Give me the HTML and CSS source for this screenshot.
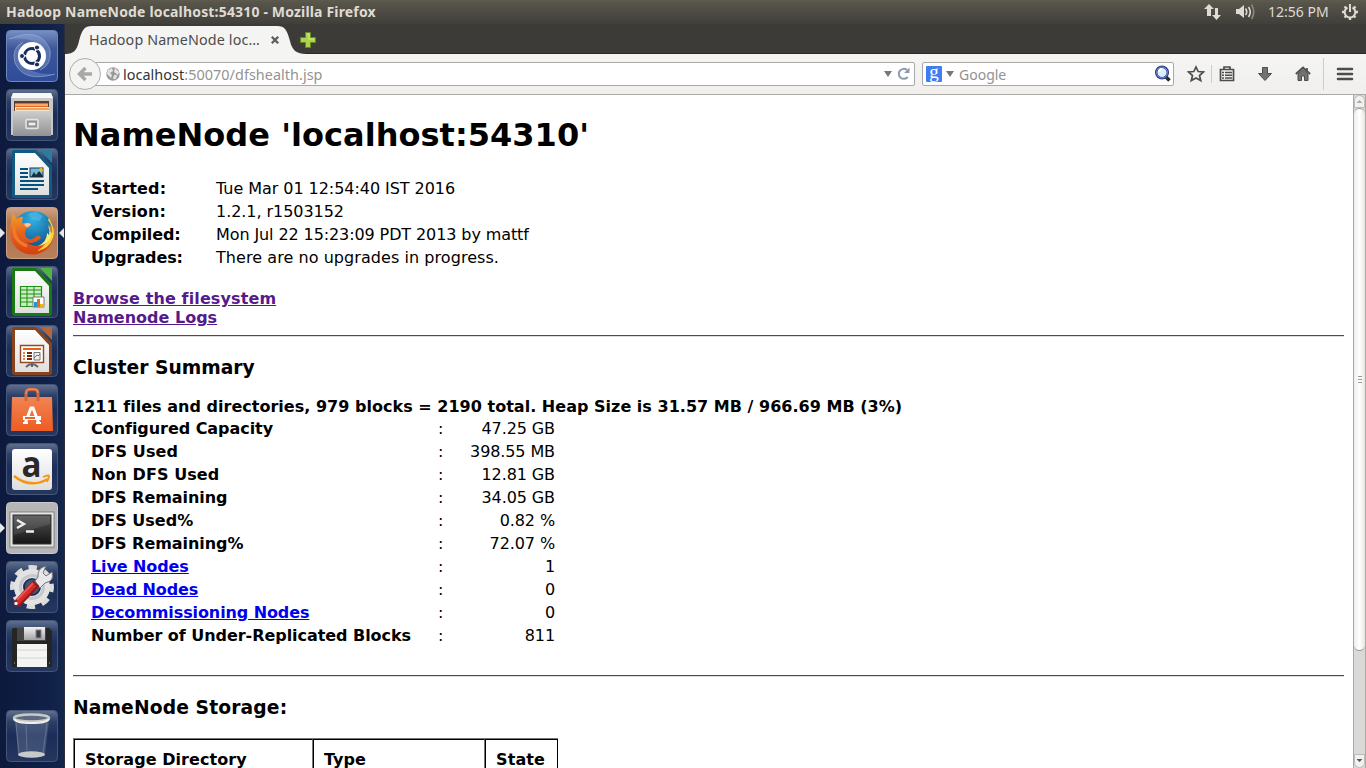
FILE: index.html
```html
<!DOCTYPE html>
<html lang="en">
<head>
<meta charset="utf-8">
<title>Hadoop NameNode localhost:54310</title>
<link rel="stylesheet" href="styles.css">
</head>
<body>
<div class="desktop">
<header class="panel">
  <span class="window-title">Hadoop NameNode localhost:54310 - Mozilla Firefox</span>
  <div class="indicators">
    <svg width="18" height="18" viewBox="0 0 18 18"><path d="M5 1L0 6H3V13H7V6H10ZM12.5 17L8 12H11V5H14V12H17Z" fill="#dfdbd2"/></svg>
    <svg class="ind-sound" width="21" height="18" viewBox="0 0 21 18"><path d="M1 6H4L9 2V15L4 11H1Z" fill="#dfdbd2"/><path d="M10.5 5.500Q13 9 10.5 12M13.500 4Q17 9 13.500 14" fill="none" stroke="#dfdbd2" stroke-width="1.600"/><path d="M16.500 1.500Q21 9 16.500 16" fill="none" stroke="#8b887f" stroke-width="1.600"/></svg>
    <span class="clock">12:56 PM</span>
    <svg width="18" height="18" viewBox="0 0 18 18"><g fill="none" stroke="#dfdbd2" stroke-width="2"><path d="M6.500 4.500A5.300 5.300 0 1 0 11.500 4.500M9 1V9"/><path stroke-width="2.300" d="M3.500 3.500L5 5M14.500 3.500L13 5M1 9H3.500M14.500 9H17M3.500 14.500L5 13M14.500 14.500L13 13M9 14.500V17"/></g></svg>
  </div>
</header>
<div class="workspace">
<nav class="launcher">
  <svg class="tile" viewBox="0 0 52 52">
    <defs>
      <linearGradient id="dash" x1="0" y1="0" x2="0" y2="1"><stop offset="0" stop-color="#7790c5"/><stop offset=".35" stop-color="#3f5799"/><stop offset="1" stop-color="#2e4c9b"/></linearGradient>
      <linearGradient id="glass" x1="0" y1="0" x2="0" y2="1"><stop offset="0" stop-color="#62718f"/><stop offset=".22" stop-color="#2c3f68"/><stop offset=".5" stop-color="#1a2d58"/><stop offset="1" stop-color="#26375f"/></linearGradient>
      <linearGradient id="silver" x1="0" y1="0" x2="0" y2="1"><stop offset="0" stop-color="#f2f2f2"/><stop offset="1" stop-color="#a4a4a4"/></linearGradient>
      <linearGradient id="drawer" x1="0" y1="0" x2="0" y2="1"><stop offset="0" stop-color="#cdcdcd"/><stop offset="1" stop-color="#929292"/></linearGradient>
      <linearGradient id="paper" x1="0" y1="0" x2="0" y2="1"><stop offset="0" stop-color="#fff"/><stop offset="1" stop-color="#dedede"/></linearGradient>
      <linearGradient id="tan" x1="0" y1="0" x2="0" y2="1"><stop offset="0" stop-color="#d0a385"/><stop offset=".3" stop-color="#ad7855"/><stop offset="1" stop-color="#b77f5a"/></linearGradient>
      <linearGradient id="bag" x1="0" y1="0" x2="0" y2="1"><stop offset="0" stop-color="#f18452"/><stop offset="1" stop-color="#ee5c22"/></linearGradient>
      <linearGradient id="screen" x1="0" y1="0" x2="0" y2="1"><stop offset="0" stop-color="#555"/><stop offset=".5" stop-color="#343434"/><stop offset="1" stop-color="#151515"/></linearGradient>
      <radialGradient id="globe" cx=".5" cy=".2" r=".8"><stop offset="0" stop-color="#31b3e5"/><stop offset="1" stop-color="#09427c"/></radialGradient>
      <linearGradient id="fox" x1="0" y1="0" x2="0" y2="1"><stop offset="0" stop-color="#f3a12a"/><stop offset=".45" stop-color="#e76422"/><stop offset="1" stop-color="#d53f12"/></linearGradient>
    </defs>
    <rect x=".5" y=".5" width="51" height="51" rx="4" fill="url(#dash)" stroke="#7087bb"/>
    <path d="M3 9Q35-4 44 20Q46 35 34 40Q42 29 38 19Q28 6 3 9ZM49 44Q18 53 9 33Q5 18 17 12Q10 23 15 33Q25 45 49 44Z" fill="#a9c3e8" opacity=".28"/>
    <path d="M3 9Q35-4 44 20Q46 35 34 40M49 44Q18 53 9 33Q5 18 17 12" fill="none" stroke="#aac0e5" stroke-opacity=".5"/>
    <circle cx="26" cy="26" r="14" fill="#fff"/>
    <circle cx="26" cy="26" r="7.500" fill="none" stroke="#182d5b" stroke-width="3" stroke-dasharray="14.200 1.500" stroke-dashoffset="7"/>
    <g fill="#182d5b" stroke="#fff"><circle cx="16" cy="26" r="2.500"/><circle cx="31" cy="17.500" r="2.500"/><circle cx="31" cy="34.500" r="2.500"/></g>
  </svg>

  <svg class="tile" viewBox="0 0 52 52">
    <rect x=".5" y=".5" width="51" height="51" rx="4" fill="url(#glass)" stroke="#465676"/>
    <path d="M7 4H45L47 9V46H5V9Z" fill="#c9c9c9"/><path d="M5 9L7 4H45L47 9Z" fill="#f8f8f8"/>
    <rect x="8" y="12" width="35" height="11" fill="#5b3b2d"/><rect x="9" y="14" width="33" height="8" fill="#e2682c"/><path d="M9 16H42" stroke="#ffbf76" stroke-width="1.500"/><path d="M9 18H43V22H9Z" fill="#f7e3cb"/><path d="M10 20H43" stroke="#e78e35" stroke-width="1.500"/>
    <path d="M7 22H45V47H7Z" fill="url(#drawer)"/><rect x="20" y="30.500" width="12" height="9" rx="1" fill="#aaa" stroke="#e5e5e5" stroke-width="1.500"/><rect x="22" y="33" width="8" height="4" fill="#eee" stroke="#777"/>
  </svg>

  <svg class="tile" viewBox="0 0 52 52">
    <rect x=".5" y=".5" width="51" height="51" rx="4" fill="url(#glass)" stroke="#465676"/>
    <path d="M8 2H30L46 18V47Q46 50 43 50H9Q6 50 6 47V4Q6 2 8 2Z" fill="#105a83"/><path d="M9 5H29L43 20V47H9Z" fill="url(#paper)"/><path d="M34 2H46V15Z" fill="#3279a0"/>
    <g stroke="#07527b" stroke-width="2"><path d="M14 21H22M14 25H22M14 29H22M14 33H38M14 37H38M14 41H32"/></g>
    <rect x="24" y="20" width="13" height="9" fill="#75b7da" stroke="#123b51"/><circle cx="35" cy="22" r="2" fill="#e9b92b"/><path d="M25 29L28 24L30 27L33 23L37 28V29Z" fill="#182f3b"/>
  </svg>

  <div class="slot">
    <svg class="tile" viewBox="0 0 52 52">
      <rect x=".5" y=".5" width="51" height="51" rx="4" fill="url(#tan)" stroke="#cba184"/>
      <circle cx="27" cy="25" r="21" fill="url(#globe)"/><path d="M22 7L29 4L37 9L33 14L26 12Z" fill="#58b7e0" opacity=".6"/>
      <path d="M7 7L11 12Q14 9 17 10L16 16L25 17L24 20L20 22Q17 29 23 32Q27 33 31 29Q34 28 35 31Q28 38 20 35Q31 43 40 34Q47 28 43 17L47 21Q47 16 43 11Q49 19 48 27Q47 42 32 47Q16 50 7 37Q1 25 7 7Z" fill="url(#fox)"/><path d="M42 13Q47 19 46 26L43 24Q44 36 31 44Q43 42 47 31Q50 23 43 11Z" fill="#f9d33c"/><path d="M42 18Q46 23 44 29L41 26Q41 35 32 39Q42 38 45 29" fill="#ffe974"/><path d="M8 19Q7 34 21 39" fill="none" stroke="#ef7c28" stroke-width="3"/><path d="M18 17Q21 15 25 17Q24 20 20 20Z" fill="#f7c6a2"/>
    </svg>
    <span class="arrow-left"></span><span class="arrow-right"></span>
  </div>

  <svg class="tile" viewBox="0 0 52 52">
    <rect x=".5" y=".5" width="51" height="51" rx="4" fill="url(#glass)" stroke="#465676"/>
    <path d="M8 2H30L46 18V47Q46 50 43 50H9Q6 50 6 47V4Q6 2 8 2Z" fill="#187814"/><path d="M9 5H29L43 20V47H9Z" fill="url(#paper)"/><path d="M34 2H46V15Z" fill="#52b344"/>
    <path d="M14.5 20.500H35.500V40.500H14.500Z" fill="#c8efbf" stroke="#238d19" stroke-width="1.200"/><path d="M15 24H35M15 28H35M15 32H35M15 36H35M21 20V40M28 20V40" stroke="#238d19"/>
    <path d="M27 31H38V41H27Z" fill="#fff" stroke="#777"/><path d="M28 41V36H31V41" fill="#2599cc"/><path d="M31 41V33H34V41" fill="#e46e27"/><path d="M34 41V38H38V41" fill="#ecb51b"/>
  </svg>

  <svg class="tile" viewBox="0 0 52 52">
    <rect x=".5" y=".5" width="51" height="51" rx="4" fill="url(#glass)" stroke="#465676"/>
    <path d="M8 2H30L46 18V47Q46 50 43 50H9Q6 50 6 47V4Q6 2 8 2Z" fill="#87421e"/><path d="M9 5H29L43 20V47H9Z" fill="url(#paper)"/><path d="M34 2H46V15Z" fill="#b86639"/>
    <path d="M14.500 20.500H37.500V37.500H14.500Z" fill="#fff" stroke="#994720" stroke-width="1.400"/><path d="M17 24H35" stroke="#d8651f" stroke-width="2"/><path d="M17 28H19M17 31H19M17 34H19" stroke="#e6823b" stroke-width="2"/><path d="M21 28H26M21 31H26M21 34H26" stroke="#762c0b" stroke-width="2"/><path d="M28 27.500H34V35H28Z" fill="#eee" stroke="#777"/><path d="M28 33L31 30L32 31L34 29" fill="none" stroke="#409831"/><path d="M20 42Q26 36 32 42M26 37V42" fill="none" stroke="#666" stroke-width="2"/>
  </svg>

  <svg class="tile" viewBox="0 0 52 52">
    <rect x=".5" y=".5" width="51" height="51" rx="4" fill="url(#glass)" stroke="#465676"/>
    <path d="M6 13H46L47 47H5Z" fill="url(#bag)"/><path d="M20 17V9Q20 5.500 24 5.500H28Q32 5.500 32 9V17" fill="none" stroke="#d5663d" stroke-width="3"/><path d="M20 10Q20 5 24 5H28Q32 5 32 9" fill="none" stroke="#f49a72"/>
    <path d="M19.500 38.500L25 24H27L32.500 38.500" fill="none" stroke="#fff" stroke-width="3"/><path d="M17 32H35V36H17Z" fill="#fff"/><path d="M19 34H29" stroke="#ee652c" stroke-width="2"/><path d="M17 39H22M30 39H35" stroke="#fff" stroke-width="2"/>
  </svg>

  <svg class="tile store" viewBox="0 0 52 52">
    <rect x=".5" y=".5" width="51" height="51" rx="4" fill="url(#glass)" stroke="#465676"/>
    <rect x="6" y="6" width="40" height="41" rx="3" fill="url(#paper)"/>
    <text x="15.500" y="34" class="store-letter" textLength="20" lengthAdjust="spacingAndGlyphs">a</text>
    <path d="M8 33Q24 46 42 36" fill="none" stroke="#f6960f" stroke-width="2.500"/><path d="M37 34Q44 31 43 34L41 39" fill="none" stroke="#f6960f" stroke-width="1.800"/>
  </svg>

  <div class="slot">
    <svg class="tile" viewBox="0 0 52 52">
      <rect x=".5" y=".5" width="51" height="51" rx="4" fill="#b6b6b6" stroke="#cacaca"/><rect x="3" y="9" width="46" height="38" rx="2" fill="#aaa"/><rect x="4" y="10" width="44" height="35" fill="#e6e6e6" stroke="#888"/><rect x="7" y="13" width="38" height="29" fill="url(#screen)" stroke="#333"/><path d="M8 14H44V22L8 33Z" fill="#fff" opacity=".1"/><path d="M11 18L18 22L11 26M20 29.500H28" fill="none" stroke="#eee" stroke-width="2.300"/>
    </svg>
    <span class="arrow-left"></span>
  </div>

  <svg class="tile" viewBox="0 0 52 52">
    <rect x=".5" y=".5" width="51" height="51" rx="4" fill="url(#glass)" stroke="#465676"/>
    <circle cx="26" cy="26" r="19" fill="none" stroke="#dcdcdc" stroke-width="6" stroke-dasharray="8 6.920" transform="rotate(-100 26 26)"/><circle cx="26" cy="26" r="13.500" fill="none" stroke="#e3e3e3" stroke-width="9"/><circle cx="26" cy="26" r="11.500" fill="none" stroke="#c6c8cb" stroke-width="3"/><circle cx="26" cy="26" r="7" fill="#49566e"/>
    <path d="M29 20L32 16Q31 7 40 5L37 12L40 15L46 11Q49 20 39 22L34 27Z" fill="#e8e8e8" stroke="#777"/>
    <path d="M8 42L27 21L32 25L13 45Z" fill="#d32a2a" stroke="#92181a" stroke-linejoin="round" stroke-width="2"/><path d="M11 39L27 22" stroke="#ee5750" stroke-width="2"/><circle cx="10" cy="42.500" r="1.700" fill="#eee"/>
  </svg>

  <svg class="tile" viewBox="0 0 52 52">
    <rect x=".5" y=".5" width="51" height="51" rx="4" fill="url(#glass)" stroke="#465676"/>
    <path d="M7 8H43L46 11V47H6V9Z" fill="#252525"/><path d="M11 8H40V21H11Z" fill="#444"/><path d="M18 7H39V20H18Z" fill="url(#silver)"/><rect x="30" y="10" width="5" height="8" fill="#393e44" stroke="#82868a"/><path d="M11 24H41V47H11Z" fill="#f4f4f2"/><path d="M11 30H41M11 38H41" stroke="#d6d5cd"/><path d="M8 43H9M43 43H44" stroke="#aaa"/>
  </svg>

  <svg class="tile trash" viewBox="0 0 52 52">
    <rect x=".5" y=".5" width="51" height="51" rx="4" fill="url(#glass)" stroke="#465676"/>
    <path d="M9 10L12 45Q26 50 39 45L43 10Z" fill="#8795ae" opacity=".3"/><ellipse cx="25.500" cy="44.500" rx="13.500" ry="3.300" fill="#c7cac8"/><path d="M10 13L13 43M41 13L37 43M20 15L21 40" stroke="#bac4d5" stroke-opacity=".3" fill="none"/><ellipse cx="25.500" cy="8" rx="17.500" ry="3.500" fill="#5c6980" stroke="#c6c9c4" stroke-width="2.500"/><path d="M8 9Q10 13 25.500 13Q41 13 43 9" fill="none" stroke="#efefea" stroke-width="2"/>
  </svg>
</nav>

<main class="browser">
  <div class="tabs">
    <div class="tab">
      <svg class="tab-shape" width="242" height="30" viewBox="0 0 242 30"><path d="M0 30C9 30 12 26 14 17C17 6 19 2 27 2H212C220 2 222 6 225 17C227 26 231 30 242 30Z" fill="#f4f4f2"/></svg>
      <span class="tab-label">Hadoop NameNode loc…</span>
      <svg class="tab-close" width="10" height="10" viewBox="0 0 10 10"><path d="M1.800 1.800L8.200 8.200M8.200 1.800L1.800 8.200" stroke="#5c5c5b" stroke-width="2.300"/></svg>
    </div>
    <svg class="new-tab" width="16" height="16" viewBox="0 0 16 16"><path d="M5.500 .5H10.500V5.500H15.500V10.500H10.500V15.500H5.500V10.500H.5V5.500H5.500Z" fill="#add24e" stroke="#628b20"/><path d="M7 2H9V7H14" fill="none" stroke="#d7ea91"/></svg>
  </div>

  <div class="toolbar">
    <div class="back"><svg width="16" height="16" viewBox="0 0 16 16"><path d="M8.500 2L2.500 8L8.500 14M3 8H15" fill="none" stroke="#a8a8a8" stroke-width="3.400"/></svg></div>
    <div class="address">
      <svg width="14" height="14" viewBox="0 0 14 14"><circle cx="7" cy="7" r="6.700" fill="#999"/><path d="M2 3L6 1L7 4L4 6L6 8L5 11L1 7ZM9 1L13 5L12 8L8 5ZM8 8L11 8L10 12L7 12Z" fill="#e4e4e4"/></svg>
      <span class="url"><b>localhost</b>:50070/dfshealth.jsp</span>
      <span class="caret"></span>
      <svg class="reload" width="14" height="14" viewBox="0 0 14 14"><path d="M10.700 10A5 5 0 1 1 10 3" fill="none" stroke="#8c9bab" stroke-width="2"/><path d="M7 6H12.500V.5Z" fill="#8c9bab"/></svg>
    </div>
    <div class="search">
      <span class="engine">g</span><span class="caret"></span><span class="hint">Google</span>
      <svg width="18" height="18" viewBox="0 0 18 18"><path d="M11 11L15.500 15.500" stroke="#292929" stroke-width="3.500"/><circle cx="8" cy="7.500" r="5.800" fill="#dcecff" stroke="#303e83" stroke-width="2.500"/><circle cx="8" cy="7.500" r="5.500" fill="none" stroke="#6e8dce"/><path d="M5 7Q5 4 8 4" fill="none" stroke="#fff" stroke-width="2"/></svg>
    </div>
    <div class="actions">
      <svg width="18" height="18" viewBox="0 0 18 18"><path d="M9 2L11.200 6.500L16.500 7L12.500 10.500L13.700 15.500L9 12.900L4.300 15.500L5.500 10.500L1.500 7L6.800 6.500Z" fill="none" stroke="#4d4d4d" stroke-width="1.700"/></svg>
      <span class="divider small"></span>
      <svg class="list" width="16" height="18" viewBox="0 0 16 18"><path d="M1.500 4.500H14.500V15.500H1.500ZM5 4V2H11V4" fill="none" stroke="#4d4d4d" stroke-width="1.700"/><path d="M3 7.500H5M6 7.500H13M3 10.300H5M6 10.300H13M3 13H5M6 13H13" stroke="#4d4d4d" stroke-width="1.400"/></svg>
      <svg class="download" width="16" height="18" viewBox="0 0 16 18"><path d="M5.500 2.500H10.500V8.500H14.500L8 15.500L1.500 8.500H5.500Z" fill="#737373" stroke="#4d4d4d"/></svg>
      <svg class="home" width="16" height="18" viewBox="0 0 16 18"><path d="M3 9L8 4.500L13 9V15.500H9.500V11H6.500V15.500H3Z" fill="#737373" stroke="#4d4d4d"/><path d="M.8 9L8 2.500L15.200 9M12 3V6" fill="none" stroke="#4d4d4d" stroke-width="1.700"/></svg>
      <span class="divider"></span>
      <svg width="18" height="16" viewBox="0 0 18 16"><path d="M2 3H16M2 8H16M2 13H16" stroke="#4d4d4d" stroke-width="2.600" stroke-linecap="round"/></svg>
    </div>
  </div>

  <div class="viewport">
    <article class="page">
      <h1>NameNode 'localhost:54310'</h1>
      <dl class="info">
        <dt class="loose">Started:</dt><dd class="snug">Tue Mar 01 12:54:40 IST 2016</dd>
        <dt class="loose">Version:</dt><dd class="snug">1.2.1, r1503152</dd>
        <dt class="tight">Compiled:</dt><dd class="tight">Mon Jul 22 15:23:09 PDT 2013 by mattf</dd>
        <dt class="tight">Upgrades:</dt><dd class="roomy">There are no upgrades in progress.</dd>
      </dl>
      <div class="links"><a class="loose" href="#">Browse the filesystem</a><br><a href="#">Namenode Logs</a></div>
      <hr>
      <h3>Cluster Summary</h3>
      <div class="summary">1211 files and directories, 979 blocks = 2190 total. Heap Size is 31.57 MB / 966.69 MB (3%)</div>
      <div class="stats">
        <b class="snug">Configured Capacity</b><i>:</i><span>47.25 GB</span>
        <b class="loose">DFS Used</b><i>:</i><span>398.55 MB</span>
        <b class="roomy">Non DFS Used</b><i>:</i><span>12.81 GB</span>
        <b class="snug">DFS Remaining</b><i>:</i><span>34.05 GB</span>
        <b>DFS Used%</b><i>:</i><span>0.82 %</span>
        <b class="snug">DFS Remaining%</b><i>:</i><span>72.07 %</span>
        <b><a class="tight" href="#">Live Nodes</a></b><i>:</i><span>1</span>
        <b><a class="tight" href="#">Dead Nodes</a></b><i>:</i><span>0</span>
        <b><a class="tight" href="#">Decommissioning Nodes</a></b><i>:</i><span>0</span>
        <b class="snug">Number of Under-Replicated Blocks</b><i>:</i><span>811</span>
      </div>
      <hr>
      <h3 class="loose">NameNode Storage:</h3>
      <div class="storage"><b class="roomy">Storage Directory</b><b>Type</b><b class="loose">State</b></div>
    </article>
    <div class="scrollbar">
      <span class="step"><svg width="11" height="12" viewBox="0 0 11 12"><path d="M2.500 8L5.500 5L8.500 8Z" fill="#aaa"/></svg></span>
      <span class="thumb"><i></i><i></i><i></i></span>
      <span class="track"></span>
      <span class="step down"><svg width="11" height="12" viewBox="0 0 11 12"><path d="M2.500 5L5.500 8L8.500 5Z" fill="#555"/></svg></span>
    </div>
  </div>
</main>
</div>
</div>
</body>
</html>
```
FILE: styles.css
```css
* { box-sizing: border-box; }
body { margin: 0; overflow: hidden; }
svg { display: block; flex: none; }
.desktop { width: 1366px; height: 768px; display: flex; flex-direction: column; overflow: hidden; }
.panel { height: 24px; flex: none; display: flex; align-items: center; justify-content: space-between; padding: 0 7px 0 6px; background: linear-gradient(#5d5b4d 0, #57544b 3px, #403f3a 100%); color: #dfdbd2; font: 14px/24px "Noto Sans", sans-serif; }
.window-title { font-size: 14px; font-weight: 700; letter-spacing: .17px; white-space: nowrap; }
.indicators { display: flex; align-items: center; }
.ind-sound { margin: 0 12px 0 13px; }
.clock { width: 61px; margin-right: 12px; white-space: nowrap; }
.workspace { display: flex; flex: 1; min-height: 0; }
.launcher { width: 65px; flex: none; padding: 6px 0 6px 6px; display: flex; flex-direction: column; gap: 7px; border-right: 1px solid #2b2f3b; background: linear-gradient(90deg, #0d1a3d, #102047 75%, #15264d); }
.tile { width: 52px; height: 52px; }
.store { overflow: visible; }
.slot { position: relative; height: 52px; }
.trash { margin-top: auto; }
.arrow-left, .arrow-right { position: absolute; top: 21px; border: 5px solid transparent; }
.arrow-left { left: -6px; border-left-color: #e5e7eb; border-right: 0; }
.arrow-right { right: 0; border-right-color: #e5e7eb; border-left: 0; }
.store-letter { font: 700 36px "Open Sans", sans-serif; fill: #292929; }

.browser { flex: 1; min-width: 0; display: flex; flex-direction: column; }
.tabs { height: 30px; flex: none; display: flex; background: #3c3b37; border-bottom: 1px solid #292926; }
.tab { width: 235px; height: 30px; position: relative; display: flex; align-items: center; padding: 2px 0 0 24px; font: 14.3px/20px "Noto Sans", sans-serif; color: #4c4c4c; }
.tab-shape { position: absolute; left: 0; top: 0; }
.tab-label { position: relative; width: 181px; white-space: nowrap; letter-spacing: .14px; }
.tab-close { position: relative; }
.new-tab { margin: 8px 0 0; }
.toolbar { height: 41px; flex: none; display: flex; align-items: center; padding: 0 12px 0 4px; background: linear-gradient(#f5f5f4, #f0efee); border-bottom: 1px solid #aba9a5; font: 14.4px/22px "Noto Sans", sans-serif; }
.back { width: 32px; height: 32px; flex: none; border: 1px solid #a8aeb5; border-radius: 50%; display: flex; align-items: center; justify-content: center; background: #f4f4f3; z-index: 1; }
.address { width: 822px; height: 24px; margin-left: -8px; flex: none; border: 1px solid #aaa9a6; border-radius: 0 2px 2px 0; background: #fff; display: flex; align-items: center; padding: 0 3px 0 12px; color: #939393; }
.url { margin-left: 3px; padding-top: 1px; white-space: nowrap; letter-spacing: .05px; }
.url b { color: #333; font-weight: 400; }
.caret { border: 4px solid transparent; border-top: 6px solid #777; border-bottom: 0; }
.address .caret { margin-left: auto; margin-right: 5px; }
.search { width: 252px; height: 24px; margin-left: 7px; flex: none; border: 1px solid #aaa9a6; border-radius: 2px; background: #fff; display: flex; align-items: center; padding: 0 1px 0 3px; }
.engine { width: 16px; height: 16px; border-radius: 1px; background: #427cf4; color: #fff; font: 19px/11px "Liberation Serif", serif; text-align: center; margin-right: 4px; }
.hint { color: #929292; margin-left: 5px; padding-top: 1px; font-size: 14px; }
.search svg { margin-left: auto; }
.actions { flex: 1; display: flex; align-items: center; padding-left: 13px; }
.divider { width: 1px; height: 32px; background: #c7ced5; margin: 0 12px; }
.divider.small { height: 18px; margin: 0 7px 0 6px; }
.download { margin: 0 22px; }

.viewport { flex: 1; min-height: 0; display: flex; background: #fff; }
.page { flex: 1; padding: 0 9px 0 8px; overflow: hidden; font: 16px/19px "DejaVu Sans", sans-serif; color: #000; }
.loose { letter-spacing: .12px; }
.roomy { letter-spacing: .06px; }
.snug { letter-spacing: -.05px; }
.tight { letter-spacing: -.1px; }
h1 { margin: 21px 0 23px; font-size: 32px; line-height: 38px; letter-spacing: .03px; }
h3 { margin: 0; font-size: 18.72px; line-height: 22px; }
hr { margin: 8px 0 20px; height: 2px; border: 0; border-top: 1px solid #4d4d4d; border-bottom: 1px solid #ddd; }
.info { display: grid; grid-template-columns: 125px auto; line-height: 23px; margin: 0 0 20px 18px; }
.info dt { font-weight: 700; }
.info dd { margin: 0; }
.links { font-weight: 700; }
.links a { color: #551a8b; }
.summary { margin-top: 18px; font-weight: 700; letter-spacing: .02px; }
.stats { width: 464px; display: grid; grid-template-columns: 347px 1fr auto; margin: 1px 0 28px 18px; line-height: 23px; }
.stats i { font-style: normal; }
.stats span { text-align: right; letter-spacing: -.1px; }
.stats a { color: #0000ee; }
.storage { display: grid; grid-template-columns: 239px 172px 73px; width: 485px; margin-top: 19px; border-top: 1px solid #777; border-left: 1px solid #777; }
.storage b { height: 60px; padding: 10px; border-top: 1px solid #000; border-left: 1px solid #000; border-right: 1px solid #777; }
.storage b:last-child { border-right-color: #000; }
.scrollbar { width: 13px; flex: none; display: flex; flex-direction: column; background: #dad9d7; border: solid #aaa8a4; border-width: 0 1px; }
.step { height: 13px; border: 1px solid #bbb; border-radius: 6px 6px 0 0; background: #f2f1ef; }
.step.down { border-radius: 0 0 6px 6px; height: 14px; }
.step svg { margin: -1px; }
.thumb { height: 543px; border: 1px solid #999; border-width: 1px 0; border-radius: 6px; background: linear-gradient(90deg, #eee, #fff 50%, #e7e6e3); display: flex; flex-direction: column; align-items: center; justify-content: center; gap: 2px; }
.thumb i { width: 4px; height: 1px; background: #999; }
.track { flex: 1; }
```
